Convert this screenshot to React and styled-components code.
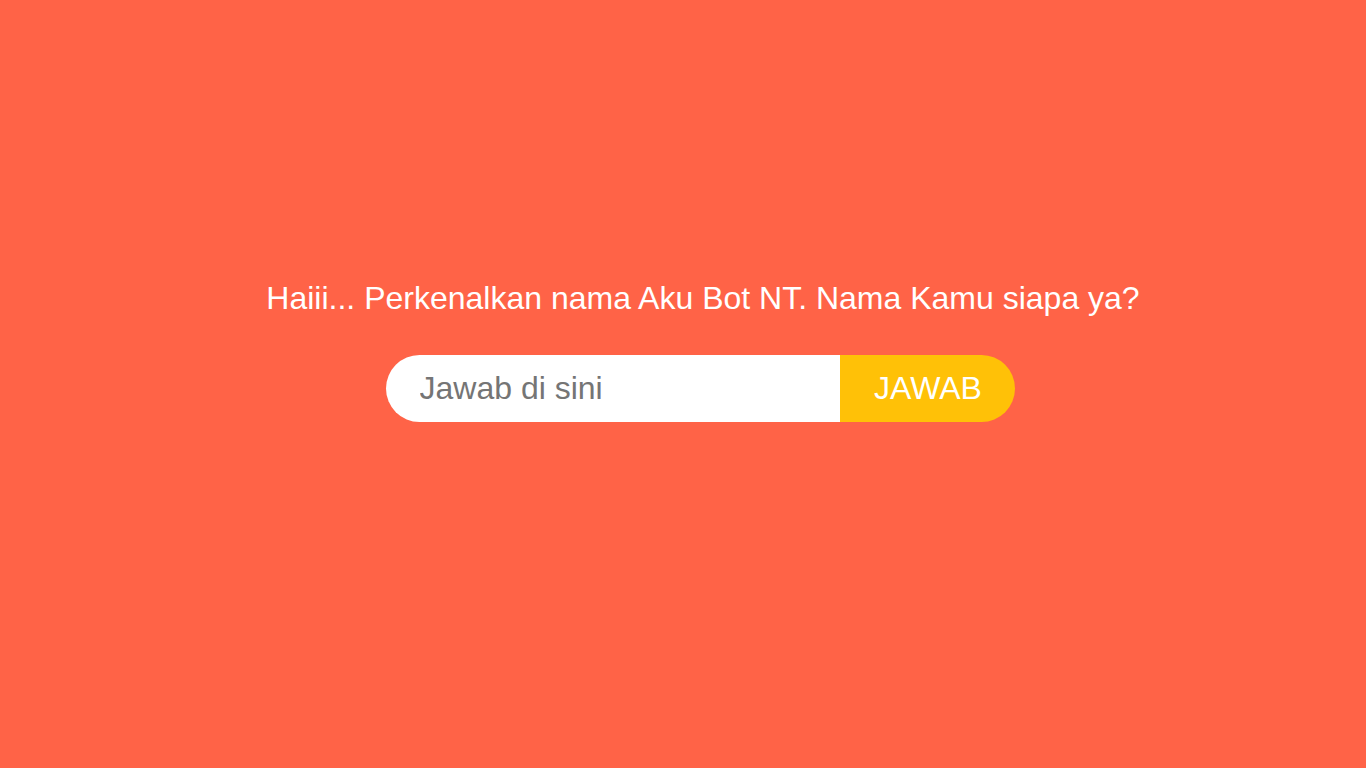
import styled, { createGlobalStyle } from "styled-components"

const Global = createGlobalStyle`
    html, body { margin: 0; padding: 0; }
    body { background: #ff6347; font-family: "Liberation Sans", Arial, sans-serif; }
`

export default function App(){
    return(
        <>
            <Global />
            <Page>
                <Question>Haiii... Perkenalkan nama Aku Bot NT. Nama Kamu siapa ya?</Question>
                <Form onSubmit={e => e.preventDefault()}>
                    <Input type="text" placeholder="Jawab di sini" />
                    <Button type="submit">JAWAB</Button>
                </Form>
            </Page>
        </>
    )
}

const Page = styled.div`
    height: 768px;
    display: flex; flex-direction: column; align-items: center; justify-content: center;
    padding: 0 0 66px 34px; box-sizing: border-box;
`

const Question = styled.p`
    margin: 0 0 38px 6px;
    color: #fff; font-size: 32px; line-height: 37px;
`

const Form = styled.form`
    display: flex; width: 629px; height: 67px;
`

const Input = styled.input`
    flex: 1; min-width: 0;
    border: none; outline: none;
    border-radius: 34px 0 0 34px;
    padding: 0 0 0 34px;
    font-family: "Liberation Sans", Arial, sans-serif; font-size: 32px; color: #333;
    background: #fff;
    &::placeholder{ color: #757575; }
`

const Button = styled.button`
    width: 175px;
    border: none; cursor: pointer;
    border-radius: 0 34px 34px 0;
    background: #ffc107; color: #fff;
    font-family: "Liberation Sans", Arial, sans-serif; font-size: 32px;
    padding: 0 0 0 2px;
`
